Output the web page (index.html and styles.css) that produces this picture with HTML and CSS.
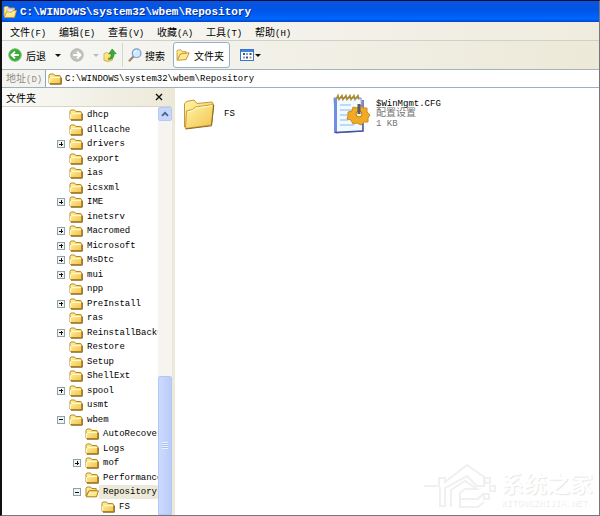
FILE: index.html
```html
<!DOCTYPE html>
<html lang="zh-CN">
  <head>
    <meta charset="utf-8">
    <title>C:\WINDOWS\system32\wbem\Repository</title>
    <link rel="stylesheet" href="styles.css">
  </head>
  <body>
    <svg class="defs" aria-hidden="true">
      <defs>
        <linearGradient id="gold" x1="0" y1="0" x2="1" y2="1">
          <stop offset="0" stop-color="#fff5a8" />
          <stop offset="1" stop-color="#f3c24a" />
        </linearGradient>
        <linearGradient id="pale" x1="0" y1="0" x2="1" y2="1">
          <stop offset="0" stop-color="#fff9c4" />
          <stop offset="1" stop-color="#ffdf6c" />
        </linearGradient>
        <symbol id="folder" viewBox="0 0 14 12">
          <path d="M1 10V2.2L2 1h3.6l1.2 1.5h5L12.6 4v6.6H1.6z" fill="url(#gold)" stroke="#b58a22" />
          <path d="M1.5 9.8V5.5L2.8 4.6h9.4" fill="none" stroke="#fffbd0" />
          <path d="M2 11.2h11.3V4.5" fill="none" stroke="#856013" />
        </symbol>
        <symbol id="folder-open" viewBox="0 0 14 12">
          <path d="M1 10V2.2L2 1h3.6l1.2 1.5h4.4V5H4z" fill="url(#gold)" stroke="#b58a22" />
          <path d="M1.2 10.8 4 4.8h9.4l-1.8 6z" fill="url(#pale)" stroke="#a87c1b" />
        </symbol>
      </defs>
    </svg>

    <div class="window">
      <header class="titlebar">
        <svg class="round" viewBox="0 0 14 14">
          <path d="M1 11V2.500L2 1.500h3l1 1.500h5.500v8z" fill="url(#gold)" stroke="#d9a637" stroke-width=".8" />
          <path d="M4 4h7v6H4z" fill="#dff0ff" stroke="#8fb6dd" stroke-width=".6" />
          <path d="M1.200 12.500 3.500 7H9l1-1.500h3.500l-2 7z" fill="url(#pale)" stroke="#c2902a" stroke-width=".8" />
        </svg>
        <h1>C:\WINDOWS\system32\wbem\Repository</h1>
      </header>

      <nav class="menubar">
        <button>文件<span>(F)</span></button>
        <button>编辑<span>(E)</span></button>
        <button>查看<span>(V)</span></button>
        <button>收藏<span>(A)</span></button>
        <button>工具<span>(T)</span></button>
        <button>帮助<span>(H)</span></button>
      </nav>

      <div class="toolbar">
        <button class="back">
          <svg class="round" viewBox="0 0 14 14">
            <circle cx="7" cy="7" r="6.2" fill="#38ab36" stroke="#63bd5b" />
            <path d="M10.8 7H3.8M7 3.6 3.6 7 7 10.4" fill="none" stroke="#fff" stroke-width="2" />
          </svg>
          后退
        </button>
        <button class="drop" aria-label="后退列表"></button>
        <button class="forward" aria-label="前进" disabled>
          <svg class="round" viewBox="0 0 14 14">
            <circle cx="7" cy="7" r="6.2" fill="#c3c3bf" stroke="#b1b1ad" />
            <path d="M3.2 7h7M7 3.6 10.4 7 7 10.4" fill="none" stroke="#fff" stroke-width="2" />
          </svg>
        </button>
        <button class="drop faded" aria-label="前进列表" disabled></button>
        <button class="up" aria-label="向上">
          <svg class="round" viewBox="0 0 14 14">
            <path d="M1 5.500l3-1 1.500 1 4-1V12L5 13.500l-4-1z" fill="url(#gold)" stroke="#c9a02e" stroke-width=".7" />
            <path d="M5 11c2.600-.8 3.400-2.600 3.200-5.200H5.800L9.200 1l4 4.800h-2.300c.4 3.600-1.600 6-5.900 5.200z" fill="#36ae30" stroke="#1f8120" stroke-width=".6" />
          </svg>
        </button>
        <button class="search">
          <svg class="round" viewBox="0 0 14 14">
            <path d="M5.400 8.600 1.6 12.6" stroke="#a48278" stroke-width="2.2" stroke-linecap="round" />
            <circle cx="8.6" cy="5.200" r="4.300" fill="#cfeaff" stroke="#7a9ed0" stroke-width="1.2" />
            <path d="M6.400 4.8c.3-1.200 1.100-1.800 2.300-1.800" fill="none" stroke="#fff" />
          </svg>
          搜索
        </button>
        <button class="folders" aria-pressed="true">
          <svg class="round" viewBox="0 0 14 14">
            <path d="M1 11.5V2.5L4.5 1.6l1.4 1.7 4.2.3v2.2L4.6 7z" fill="url(#gold)" stroke="#c5942c" stroke-width=".8" />
            <path d="M1.4 12.3 4.5 6l8.7-1.2L10 11.6z" fill="url(#pale)" stroke="#c18b22" stroke-width=".9" />
          </svg>
          文件夹
        </button>
        <button class="views" aria-label="查看方式">
          <svg class="round" viewBox="0 0 14 14">
            <rect x=".5" y="1.5" width="13" height="11" fill="#fff" stroke="#3974c6" />
            <path d="M1 3h12" stroke="#3c83e4" stroke-width="2" />
            <path d="M3 6h2M9.500 6h2M6 9.500h2" stroke="#33558d" stroke-width="2" />
            <path d="M6 6h2M3 9.500h2" stroke="#76a6e5" stroke-width="2" />
            <path d="M9.500 9.500h2" stroke="#c98a6a" stroke-width="2" />
          </svg>
          <i class="arrow"></i>
        </button>
      </div>

      <form class="address">
        <label for="path">地址<span>(D)</span></label>
        <div class="field">
          <svg class="icon"><use href="#folder" /></svg>
          <input id="path" type="text" value="C:\WINDOWS\system32\wbem\Repository">
        </div>
      </form>

      <main class="content">
        <aside class="sidebar">
          <div class="sidebar-head">
            <h2>文件夹</h2>
            <button aria-label="关闭">
              <svg viewBox="0 0 8 8"><path d="M1 1l6 6M7 1 1 7" stroke="#111" stroke-width="1.4" /></svg>
            </button>
          </div>
          <div class="sidebar-body">
            <ul class="tree">
              <li><svg class="icon"><use href="#folder" /></svg><a href="#">dhcp</a></li>
              <li><svg class="icon"><use href="#folder" /></svg><a href="#">dllcache</a></li>
              <li><button class="toggle plus" aria-label="展开"></button><svg class="icon"><use href="#folder" /></svg><a href="#">drivers</a></li>
              <li><svg class="icon"><use href="#folder" /></svg><a href="#">export</a></li>
              <li><svg class="icon"><use href="#folder" /></svg><a href="#">ias</a></li>
              <li><svg class="icon"><use href="#folder" /></svg><a href="#">icsxml</a></li>
              <li><button class="toggle plus" aria-label="展开"></button><svg class="icon"><use href="#folder" /></svg><a href="#">IME</a></li>
              <li><svg class="icon"><use href="#folder" /></svg><a href="#">inetsrv</a></li>
              <li><button class="toggle plus" aria-label="展开"></button><svg class="icon"><use href="#folder" /></svg><a href="#">Macromed</a></li>
              <li><button class="toggle plus" aria-label="展开"></button><svg class="icon"><use href="#folder" /></svg><a href="#">Microsoft</a></li>
              <li><button class="toggle plus" aria-label="展开"></button><svg class="icon"><use href="#folder" /></svg><a href="#">MsDtc</a></li>
              <li><button class="toggle plus" aria-label="展开"></button><svg class="icon"><use href="#folder" /></svg><a href="#">mui</a></li>
              <li><svg class="icon"><use href="#folder" /></svg><a href="#">npp</a></li>
              <li><button class="toggle plus" aria-label="展开"></button><svg class="icon"><use href="#folder" /></svg><a href="#">PreInstall</a></li>
              <li><svg class="icon"><use href="#folder" /></svg><a href="#">ras</a></li>
              <li><button class="toggle plus" aria-label="展开"></button><svg class="icon"><use href="#folder" /></svg><a href="#">ReinstallBacku</a></li>
              <li><svg class="icon"><use href="#folder" /></svg><a href="#">Restore</a></li>
              <li><svg class="icon"><use href="#folder" /></svg><a href="#">Setup</a></li>
              <li><svg class="icon"><use href="#folder" /></svg><a href="#">ShellExt</a></li>
              <li><button class="toggle plus" aria-label="展开"></button><svg class="icon"><use href="#folder" /></svg><a href="#">spool</a></li>
              <li><svg class="icon"><use href="#folder" /></svg><a href="#">usmt</a></li>
              <li><button class="toggle" aria-label="折叠"></button><svg class="icon"><use href="#folder" /></svg><a href="#">wbem</a></li>
              <li class="level-2"><svg class="icon"><use href="#folder" /></svg><a href="#">AutoRecover</a></li>
              <li class="level-2"><svg class="icon"><use href="#folder" /></svg><a href="#">Logs</a></li>
              <li class="level-2"><button class="toggle plus" aria-label="展开"></button><svg class="icon"><use href="#folder" /></svg><a href="#">mof</a></li>
              <li class="level-2"><svg class="icon"><use href="#folder" /></svg><a href="#">Performance</a></li>
              <li class="level-2 selected"><button class="toggle" aria-label="折叠"></button><svg class="icon"><use href="#folder-open" /></svg><a href="#">Repository</a></li>
              <li class="level-3"><svg class="icon"><use href="#folder" /></svg><a href="#">FS</a></li>
            </ul>
            <div class="scrollbar">
              <button aria-label="向上滚动">
                <svg viewBox="0 0 8 6"><path d="M1 4.8 4 1.8l3 3" fill="none" stroke="#4d6185" stroke-width="1.8" /></svg>
              </button>
              <div class="thumb"><i></i></div>
            </div>
          </div>
        </aside>

        <section class="files">
          <a class="file" href="#">
            <svg viewBox="0 0 34 34">
              <path d="M2.500 30V7L4.500 4.500 12 3l3 3.500L30 5l1.500 2.500-2 19z" fill="url(#gold)" stroke="#c19a38" />
              <path d="M3.500 31.500 4.500 14l6-1.500L13.500 10 31.500 7.500 29.500 28z" fill="url(#gold)" stroke="#c79d38" />
              <path d="M5.500 15 11 13.500l3-2.500 16-2.200" fill="none" stroke="#fffbd2" />
              <path d="M3.500 32l26-3.200L31.800 8" fill="none" stroke="#8a681d" />
            </svg>
            <span class="name">FS</span>
          </a>
          <a class="file" href="#">
            <svg class="wide" viewBox="0 0 40 42">
              <path d="M2 5h27l2 33-27 2z" fill="#f3faff" stroke="#7a86c8" />
              <path d="M2 5v35h3V6z" fill="#6f8fe0" />
              <path d="M8 12h11M8 17h13M8 22h9M8 27h8M8 32h14" stroke="#85b9ea" />
              <path d="M3 39.500 31 38V7" fill="none" stroke="#4653a5" stroke-width="1.400" />
              <path d="M4 6.500l2-4 1 4 3-4 1 4 3-4 1 4 3-4 1 4 3-4 1 4 3-4 1 4" fill="none" stroke="#a98d35" stroke-width="1.500" />
              <path d="M16 19l4-1 1-4 4 1 3-3 3 3 4 0 0 4 3 3-2 3 0 4-4 0-3 3-4-2-4 1-2-4-4-1 1-3z" fill="#f0aa24" stroke="#c98a22" />
              <circle cx="27" cy="21" r="3" fill="#fff3ce" stroke="#b57a1b" />
              <path d="M27 11v10" stroke="#555d6b" stroke-width="3" />
            </svg>
            <span class="details">
              <span class="name">$WinMgmt.CFG</span>
              <span class="type">配置设置</span>
              <span class="size">1 KB</span>
            </span>
          </a>
          <div class="watermark">
            <svg viewBox="0 0 74 48">
              <g fill="none" stroke="#f0f0f0" stroke-width="2">
                <path d="M1 23h15v-8h6v4L44 2l17 12v9h-7L44 13 22 25v18h-5V24" />
                <path d="M28 44V27l14-9 12 8H42l-5 4v14h18l6-5M37 36h18l6-6" />
                <path d="M62 15h5v5h-5zM67 23h5v5h-5zM61 31h5v5h-5z" />
              </g>
            </svg>
            <div>
              <strong>系统之家</strong>
              <small>XITONGZHIJIA.NET</small>
            </div>
          </div>
        </section>
      </main>
    </div>
  </body>
</html>
```

FILE: styles.css
```css
* {
  box-sizing: border-box;
}

body {
  margin: 0;
  color: #000;
  background: #fff;
  font-family: "Liberation Mono", "Noto Sans CJK SC", monospace;
  font-size: 9px;
}

h1,
h2,
ul {
  margin: 0;
  padding: 0;
  list-style: none;
}

a {
  color: inherit;
  text-decoration: none;
}

button {
  display: flex;
  align-items: center;
  flex: none;
  padding: 0;
  border: 0;
  color: inherit;
  background: none;
  font-family: "Noto Sans CJK SC", sans-serif;
  font-size: 10px;
}

svg {
  display: block;
  flex: none;
}

.defs {
  position: absolute;
  width: 0;
  height: 0;
}

.icon {
  width: 14px;
  height: 12px;
}

.round {
  width: 14px;
  height: 14px;
}

.window {
  display: flex;
  flex-direction: column;
  height: 100vh;
  border: 1px solid #777;
  border-top-color: #04093c;
  border-left: 2px solid #111;
}

.titlebar {
  display: flex;
  align-items: center;
  gap: 3px;
  height: 21px;
  flex: none;
  padding-left: 1px;
  color: #fff;
  background: linear-gradient(#0c55dc, #0054e6 40%, #0066ff 85%, #0045cd);
}

.titlebar h1 {
  font-size: 11px;
  text-shadow: 1px 1px #0a2b8a;
}

.menubar {
  display: flex;
  height: 19px;
  flex: none;
  padding-left: 8px;
  border-bottom: 1px solid #cfd0c8;
  background: linear-gradient(90deg, #f7f7f5, #efecdf);
}

.menubar button {
  align-items: baseline;
  width: 49px;
  padding-top: 2px;
}

.menubar span,
.address span {
  font-family: "Liberation Mono", monospace;
  font-size: 9px;
}

.toolbar {
  display: flex;
  align-items: center;
  height: 29px;
  flex: none;
  padding-left: 6px;
  border-bottom: 1px solid #a5b3bd;
  background: linear-gradient(90deg, #f7f7f5, #ece9d8);
}

.back {
  gap: 4px;
}

.drop {
  width: 23px;
  height: 14px;
  justify-content: center;
}

.drop::after,
.arrow {
  border: 3px solid transparent;
  border-top-color: #111;
  border-bottom: 0;
  content: "";
}

.faded::after {
  border-top-color: #bbb;
}

.forward {
  margin-left: 1px;
}

.up {
  margin-left: -4px;
}

.search {
  gap: 3px;
  height: 24px;
  margin-left: 5px;
  padding-left: 5px;
  border-left: 1px solid #d5d4ca;
}

.folders {
  gap: 4px;
  height: 26px;
  margin-left: 8px;
  padding: 0 5px 0 2px;
  border: 1px solid #98b0c6;
  border-radius: 3px;
  background: #fff;
}

.views {
  gap: 1px;
  margin-left: 10px;
}

.address {
  display: flex;
  height: 18px;
  flex: none;
  border-bottom: 1px solid #9bb0c3;
  background: #f4f3ee;
}

.address label {
  display: flex;
  align-items: baseline;
  width: 43px;
  padding-left: 4px;
  color: #8d8d88;
  font-size: 10px;
}

.field {
  display: flex;
  align-items: center;
  gap: 3px;
  flex: 1;
  padding-left: 2px;
  border-left: 1px solid #8fa5ba;
  background: #fff;
}

.field input {
  flex: 1;
  min-width: 0;
  padding: 0;
  border: 0;
  outline: 0;
  font: inherit;
}

.content {
  display: flex;
  flex: 1;
  min-height: 0;
}

.sidebar {
  display: flex;
  flex-direction: column;
  width: 173px;
  flex: none;
  border-right: 3px solid #ece9d8;
}

.sidebar-head {
  display: flex;
  align-items: center;
  justify-content: space-between;
  height: 19px;
  flex: none;
  padding: 0 9px 0 4px;
  border-bottom: 1px solid #d9d6c6;
  background: linear-gradient(90deg, #fafaf8, #ece9d8);
}

.sidebar-head h2 {
  font-size: 10px;
  font-weight: normal;
}

.sidebar-head svg {
  width: 8px;
  height: 8px;
}

.sidebar-body {
  display: flex;
  flex: 1;
  min-height: 0;
}

/* rows share the pane height evenly */
.tree {
  display: grid;
  grid-auto-rows: 1fr;
  flex: 1;
  min-width: 0;
  padding: 1px 0;
  overflow: hidden;
}

.tree li {
  display: flex;
  align-items: center;
  min-width: 0;
  min-height: 0;
  padding-left: 67px;
  white-space: nowrap;
}

.tree .level-2 {
  padding-left: 83px;
}

.tree .level-3 {
  padding-left: 99px;
}

.tree a {
  flex: 1;
  padding-left: 4px;
  line-height: 14px;
}

.tree .selected a {
  background: #ece9d8;
}

.toggle {
  width: 8px;
  height: 8px;
  margin-left: -12px;
  margin-right: 4px;
  border: 1px solid #8ba0b4;
  background: linear-gradient(#111, #111) center / 4px 1px no-repeat #f4f4ef;
}

.toggle.plus {
  background:
    linear-gradient(#111, #111) center / 4px 1px no-repeat,
    linear-gradient(#111, #111) center / 1px 4px no-repeat,
    #f4f4ef;
}

.scrollbar {
  display: flex;
  flex-direction: column;
  justify-content: space-between;
  width: 14px;
  flex: none;
  background: #f5f4ef;
}

.scrollbar button {
  justify-content: center;
  height: 14px;
  border: 1px solid #b7c9f2;
  border-radius: 2px;
  background: #c6d6fd;
}

.scrollbar svg {
  width: 8px;
  height: 6px;
}

.thumb {
  display: flex;
  align-items: center;
  justify-content: center;
  height: 34%;
  border: 1px solid #b4c8f6;
  border-radius: 2px 2px 0 0;
  background: linear-gradient(90deg, #cbdafe, #bbccfa);
}

.thumb i {
  width: 6px;
  height: 7px;
  background: repeating-linear-gradient(#eef3ff, #eef3ff 1px, #a9bcee 1px, #a9bcee 2px);
}

.files {
  display: grid;
  grid-template-columns: 150px 1fr;
  grid-template-rows: auto 1fr;
  flex: 1;
  min-width: 0;
  padding: 5px 6px 0 7px;
}

.file {
  display: flex;
  align-items: center;
  gap: 8px;
  height: 42px;
}

.file svg {
  width: 34px;
  height: 34px;
}

.file .wide {
  width: 40px;
  height: 42px;
}

.file:nth-child(2) {
  gap: 4px;
}

.details {
  display: flex;
  flex-direction: column;
  line-height: 10px;
}

.type,
.size {
  color: #777;
}

.type {
  font-size: 10px;
}

.watermark {
  display: flex;
  align-items: center;
  align-self: end;
  justify-self: end;
  grid-column: 2;
  gap: 4px;
  padding-bottom: 4px;
  color: #fff;
  text-shadow: 1px 1px 1px #e6e6e6;
}

.watermark svg {
  width: 74px;
  height: 48px;
}

.watermark div {
  display: flex;
  flex-direction: column;
}

.watermark strong {
  font-family: "Noto Sans CJK SC", sans-serif;
  font-size: 23px;
  line-height: 34px;
}

.watermark small {
  font-size: 9px;
  line-height: 10px;
}
```
